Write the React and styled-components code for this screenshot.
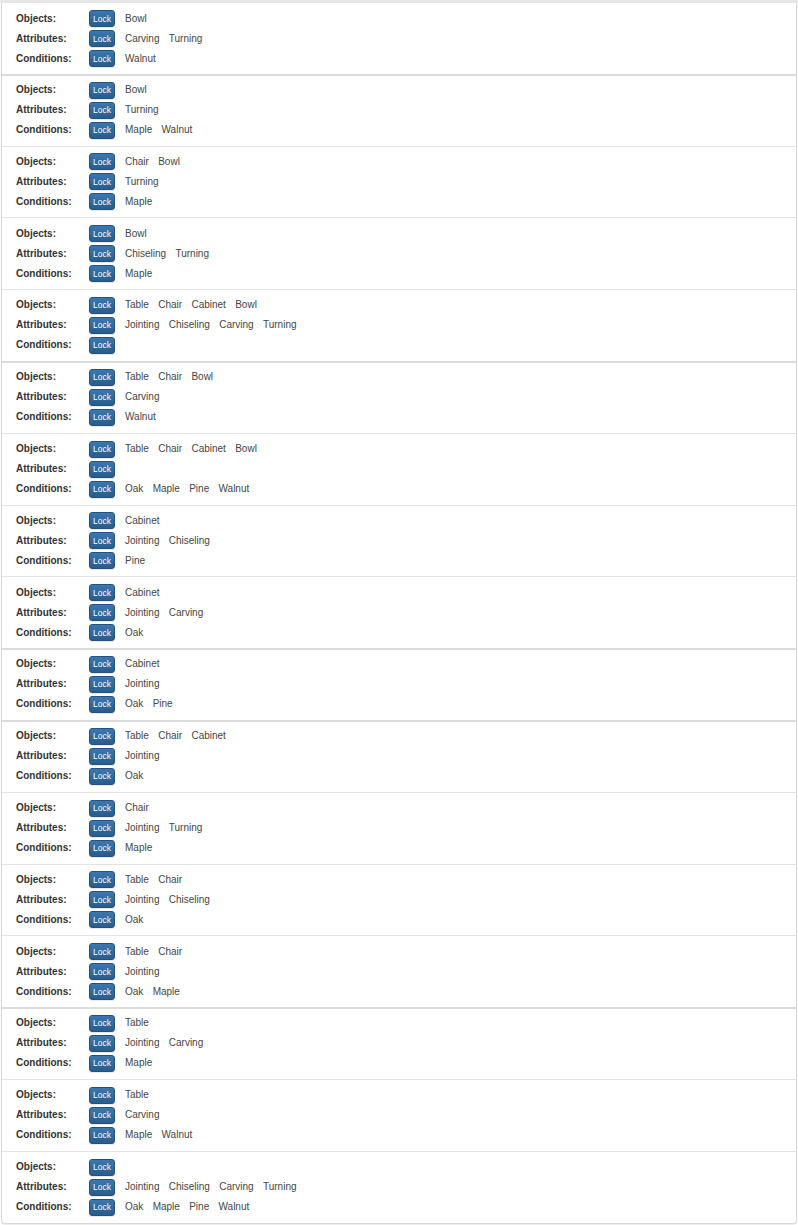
import styled, { createGlobalStyle } from 'styled-components';

const GlobalStyle = createGlobalStyle`
    body{
        margin: 0;
        background: #ffffff;
        font-family: "Liberation Sans", Arial, Helvetica, sans-serif;
    }
`;

// each group: objects, attributes, conditions; thick = starts a new section
const groups = [
    { objects: ['Bowl'], attributes: ['Carving', 'Turning'], conditions: ['Walnut'] },
    { objects: ['Bowl'], attributes: ['Turning'], conditions: ['Maple', 'Walnut'], thick: true },
    { objects: ['Chair', 'Bowl'], attributes: ['Turning'], conditions: ['Maple'] },
    { objects: ['Bowl'], attributes: ['Chiseling', 'Turning'], conditions: ['Maple'] },
    { objects: ['Table', 'Chair', 'Cabinet', 'Bowl'], attributes: ['Jointing', 'Chiseling', 'Carving', 'Turning'], conditions: [] },
    { objects: ['Table', 'Chair', 'Bowl'], attributes: ['Carving'], conditions: ['Walnut'], thick: true },
    { objects: ['Table', 'Chair', 'Cabinet', 'Bowl'], attributes: [], conditions: ['Oak', 'Maple', 'Pine', 'Walnut'] },
    { objects: ['Cabinet'], attributes: ['Jointing', 'Chiseling'], conditions: ['Pine'] },
    { objects: ['Cabinet'], attributes: ['Jointing', 'Carving'], conditions: ['Oak'] },
    { objects: ['Cabinet'], attributes: ['Jointing'], conditions: ['Oak', 'Pine'], thick: true },
    { objects: ['Table', 'Chair', 'Cabinet'], attributes: ['Jointing'], conditions: ['Oak'], thick: true },
    { objects: ['Chair'], attributes: ['Jointing', 'Turning'], conditions: ['Maple'] },
    { objects: ['Table', 'Chair'], attributes: ['Jointing', 'Chiseling'], conditions: ['Oak'] },
    { objects: ['Table', 'Chair'], attributes: ['Jointing'], conditions: ['Oak', 'Maple'] },
    { objects: ['Table'], attributes: ['Jointing', 'Carving'], conditions: ['Maple'], thick: true },
    { objects: ['Table'], attributes: ['Carving'], conditions: ['Maple', 'Walnut'] },
    { objects: [], attributes: ['Jointing', 'Chiseling', 'Carving', 'Turning'], conditions: ['Oak', 'Maple', 'Pine', 'Walnut'] },
];

function Row({ label, values }) {
    return (
        <Line>
            <Label>{label}</Label>
            <LockButton>Lock</LockButton>
            <Values>
                {values.map(v => <span key={v}>{v}</span>)}
            </Values>
        </Line>
    );
}

export default function App() {
    return (
        <Page>
            <GlobalStyle />
            <TopEdge />
            <Panel>
                {groups.map((g, i) => (
                    <Group key={i} $thick={g.thick}>
                        <Row label="Objects:" values={g.objects} />
                        <Row label="Attributes:" values={g.attributes} />
                        <Row label="Conditions:" values={g.conditions} />
                    </Group>
                ))}
            </Panel>
        </Page>
    );
}

const Page = styled.main`
    padding: 0 1px 2px 1px;
`;

const TopEdge = styled.div`
    height: 3px;
    margin: 0 -1px;
    background: #e6e6e6;
`;

const Panel = styled.section`
    border: 1px solid #d6d6d6;
    border-top: none;
    border-radius: 0 0 4px 4px;
    box-shadow: 0 1px 1px rgba(0, 0, 0, 0.08);
    background: #ffffff;
`;

const Group = styled.div`
    box-sizing: border-box;
    height: 71.8px;
    border-top: ${p => (p.$thick ? '2px solid #dcdcdc' : '1px solid #e4e4e4')};
    padding: ${p => (p.$thick ? 3.8 : 4.8)}px 14px 0 14px;

    &:first-child{
        border-top: none;
        padding-top: 5.4px;
        height: 70.8px;
    }
`;

const Line = styled.div`
    display: flex;
    align-items: center;
    height: 20px;
`;

const Label = styled.span`
    width: 73px;
    flex-shrink: 0;
    font-size: 10px;
    font-weight: bold;
    color: #333333;
`;

const LockButton = styled.button`
    box-sizing: border-box;
    width: 26px;
    height: 17px;
    padding: 0;
    margin: 1px 10px 0 0;
    flex-shrink: 0;
    font-family: "Liberation Sans", Arial, sans-serif;
    font-size: 8.5px;
    color: #ffffff;
    background: linear-gradient(to bottom, #3a78b0 0%, #285c8c 100%);
    border: 1px solid #24527e;
    border-radius: 3px;
    box-shadow: 0 1px 1px rgba(0, 0, 0, 0.1);
`;

const Values = styled.div`
    display: flex;
    gap: 9.3px;
    font-size: 10px;
    color: #454545;
`;
